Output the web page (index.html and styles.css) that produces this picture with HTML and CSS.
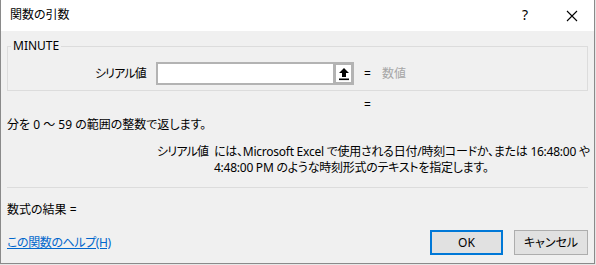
FILE: index.html
```html
<!DOCTYPE html>
<html lang="ja">
<head>
<meta charset="utf-8">
<title>関数の引数</title>
<link rel="stylesheet" href="styles.css">
</head>
<body>
<div class="dialog">
  <div class="titlebar">
    <span class="title">関数の引数</span>
    <span class="help">?</span>
    <svg class="close" width="12" height="12" viewBox="0 0 12 12"><path d="M1 1L11 11M11 1L1 11" stroke="#000" stroke-width="1.1" fill="none"/></svg>
  </div>
  <div class="content">
    <fieldset class="group">
      <legend>MINUTE</legend>
      <div class="argrow">
        <span class="arglabel">シリアル値</span>
        <div class="refbox">
          <div class="textbox"></div>
          <div class="refbtn">
            <svg width="12" height="14" viewBox="0 0 12 14"><path d="M6 1L11 6H8V10H4V6H1Z" fill="#000"/><rect x="1" y="11.5" width="10" height="1.6" fill="#000"/></svg>
          </div>
        </div>
        <span class="eq">=</span>
        <span class="hint">数値</span>
      </div>
    </fieldset>
    <div class="resultline"><span class="eq">=</span></div>
    <p class="summary">分を 0 ～ 59 の範囲の整数で返します。</p>
    <div class="argdesc">
      <span class="argname">シリアル値</span>
      <span class="argtext">には、Microsoft Excel で使用される日付/時刻コードか、または 16:48:00 や<br>4:48:00 PM のような時刻形式のテキストを指定します。</span>
    </div>
    <hr class="sep">
    <p class="formula">数式の結果 =</p>
    <div class="footer">
      <a class="helplink" href="#">この関数のヘルプ(H)</a>
      <div class="buttons">
        <button class="btn btn-default">OK</button>
        <button class="btn">キャンセル</button>
      </div>
    </div>
  </div>
</div>
</body>
</html>
```
FILE: styles.css
```css
* { box-sizing: border-box; }
html, body { margin: 0; padding: 0; }
body {
  width: 596px;
  height: 265px;
  background: #e6e6e6;
  font-family: "Noto Sans", "Noto Sans CJK JP", sans-serif;
  font-size: 12px;
  line-height: 16px;
  color: #000;
  font-feature-settings: "palt";
  overflow: hidden;
}
.dialog {
  width: 595px;
  height: 264px;
  background: #f0f0f0;
  border: 1px solid #8a8a8a;
  border-top: none;
  display: flex;
  flex-direction: column;
}
.titlebar {
  height: 31px;
  background: #fff;
  display: flex;
  align-items: center;
  padding-left: 9px;
}
.title { flex: 1; margin-top: -1px; }
.help {
  font-size: 14px;
  margin-right: 38px;
  margin-top: -1px;
}
.close { margin-right: 16px; }
.content {
  padding: 0 6px 0 6px;
  display: flex;
  flex-direction: column;
}
.group {
  margin: 7px 0 0 0;
  padding: 8px 0 5px 3px;
  border: 1px solid #dcdcdc;
  min-width: 0;
}
.group legend {
  padding: 0 2px;
  line-height: 16px;
}
.argrow {
  display: flex;
  align-items: center;
  height: 23px;
}
.arglabel {
  width: 135px;
  text-align: right;
  margin-right: 10px;
  letter-spacing: -0.8px;
}
.refbox { display: flex; height: 23px; }
.textbox {
  width: 177px;
  height: 23px;
  background: #fff;
  border: 2px solid #b3b3b3;
  border-right: none;
}
.refbtn {
  width: 21px;
  height: 23px;
  border: 3px solid #b3b3b3;
  background: #fff;
  display: flex;
  align-items: center;
  justify-content: center;
}
.argrow .eq { margin-left: 10px; }
.hint { color: #a6a6a6; margin-left: 11px; }
.resultline {
  margin-top: 6px;
  padding-left: 357px;
}
.summary { margin: 4px 0 0 0; }
.argdesc {
  margin-top: 11px;
  display: flex;
  line-height: 16px;
}
.argname {
  margin-left: 150px;
  width: 57px;
  flex-shrink: 0;
  white-space: nowrap;
  letter-spacing: -0.8px;
}
.argtext { white-space: nowrap; letter-spacing: -0.25px; }
.sep {
  margin: 11px 0 0 0;
  border: none;
  border-top: 1px solid #dcdcdc;
  height: 0;
}
.formula { margin: 14px 0 0 0; }
.footer {
  margin-top: 12px;
  display: flex;
  align-items: center;
  justify-content: space-between;
}
.helplink { color: #0066cc; text-decoration: underline; letter-spacing: -0.4px; }
.buttons { display: flex; gap: 11px; }
.btn {
  font: inherit;
  width: 74px;
  height: 25px;
  background: #e1e1e1;
  border: 1px solid #adadad;
  color: #000;
  padding: 0;
}
.btn-default {
  width: 73px;
  border: 2px solid #0078d7;
}
```
